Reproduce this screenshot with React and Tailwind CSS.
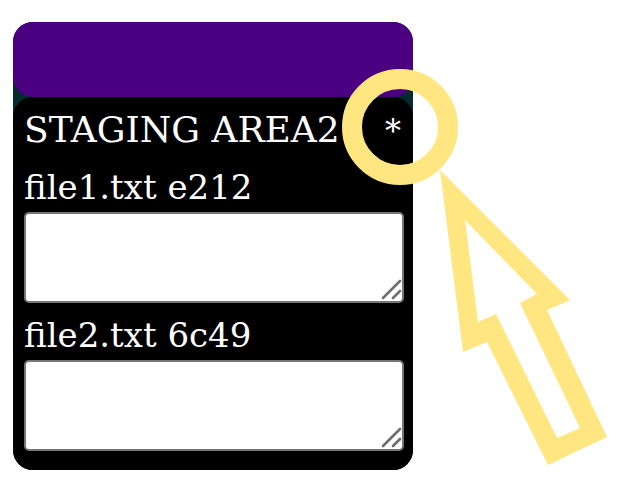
import React from "react";

function Handle() {
  return (
    <svg
      className="absolute pointer-events-none"
      style={{ right: 0, bottom: 0 }}
      width="26"
      height="26"
      viewBox="0 0 26 26"
    >
      <line x1="5" y1="21" x2="22" y2="4" stroke="#6e6e6e" strokeWidth="2.6" strokeLinecap="round" />
      <line x1="15" y1="21" x2="22" y2="14" stroke="#6e6e6e" strokeWidth="2.6" strokeLinecap="round" />
    </svg>
  );
}

function Field({ label, first }) {
  return (
    <div className={first ? "mt-[11px]" : "mt-[9px]"}>
      <div className="leading-[46px] h-[46px] text-[34px]">{label}</div>
      <div className="relative mt-[2px] w-[380px] h-[91px]">
        <textarea className="block w-full h-full resize-none bg-white border-2 border-[#767676] rounded-[5px] outline-none" />
        <Handle />
      </div>
    </div>
  );
}

export default function App() {
  return (
    <div className="relative w-[640px] h-[497px] bg-white overflow-hidden pt-[17px] pl-[8px]">
      <div className="w-[410px] h-[458px] border-[5px] border-white rounded-[25px] bg-[#032b2b] flex flex-col">
        <div className="h-[75px] rounded-[20px] bg-[#4b0082]" />
        <div
          className="flex-1 rounded-[20px] bg-black pt-[10px] pl-[11px] pr-[12px] text-white"
          style={{ fontFamily: "'DejaVu Serif', serif" }}
        >
          <div className="flex justify-between items-baseline leading-[46px] h-[46px] text-[36px]">
            <span>STAGING AREA2</span>
            <span className="text-[32px]">*</span>
          </div>
          <Field label="file1.txt e212" first />
          <Field label="file2.txt 6c49" />
        </div>
      </div>
      <svg
        className="absolute left-0 top-0 pointer-events-none"
        width="640"
        height="497"
        viewBox="0 0 640 497"
      >
        <circle cx="400" cy="127" r="48" fill="none" stroke="#FFE680" strokeWidth="20" />
        <path
          fillRule="evenodd"
          fill="#FFE680"
          d="M440 170 L570 300 L547 310 L607 437 L548 465 L487 342 L463 352 Z M465 220 L478 322 L496 314 L557 438 L580 428 L520 303 L537 294 Z"
        />
      </svg>
    </div>
  );
}
